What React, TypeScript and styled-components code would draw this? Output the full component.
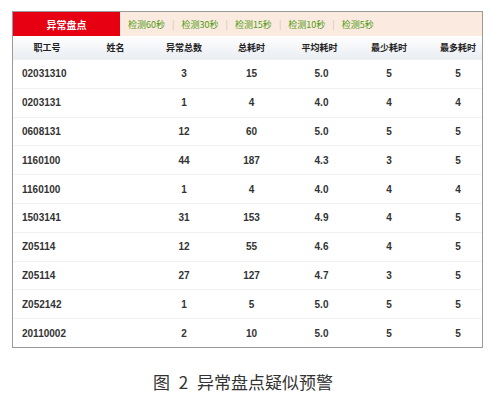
import React from "react";
import styled, { createGlobalStyle } from "styled-components";

const Global = createGlobalStyle`
  html, body { margin: 0; padding: 0; background: #ffffff; }
  body { font-family: "Liberation Sans", "Noto Sans CJK SC", sans-serif; }
`;

const COLS = "68px 69px 68px 67px 69px 70px 58px";

const Page = styled.div`
  width: 500px;
  height: 402px;
  padding: 11px 0 0 12px;
  box-sizing: border-box;
  overflow: hidden;
`;

const Frame = styled.div`
  width: 471px;
  border: 1px solid #9a9a9a;
  box-sizing: border-box;
  background: #fff;
`;

const TabBar = styled.div`
  height: 24px;
  display: flex;
  align-items: center;
  background: #fbeadf;
`;

const ActiveTab = styled.div`
  width: 107px;
  height: 100%;
  background: #e60012;
  color: #fff;
  font-family: "Noto Sans CJK SC", sans-serif;
  font-weight: 700;
  font-size: 10px;
  display: flex;
  align-items: center;
  justify-content: center;
`;

const TabLinks = styled.div`
  display: flex;
  align-items: center;
  padding-left: 8px;
  font-family: "Noto Sans CJK SC", sans-serif;
  font-size: 9px;
  color: #4f9a12;
`;

const Sep = styled.span`
  color: #cfc4bb;
  margin: 0 7px;
  font-size: 9px;
`;

const HeaderRow = styled.div`
  display: grid;
  grid-template-columns: ${COLS};
  height: 23px;
  align-items: center;
  background: linear-gradient(#ffffff, #e9edf2);
  font-family: "Noto Sans CJK SC", sans-serif;
  font-weight: 700;
  font-size: 9px;
  color: #222;
`;

const HeadCell = styled.div<{ $shift?: number }>`
  text-align: center;
  padding-left: ${(p) => p.$shift ?? 0}px;
`;

const Row = styled.div`
  display: grid;
  grid-template-columns: ${COLS};
  height: 28.8px;
  align-items: center;
  border-top: 1px solid #f2f2f2;
  box-sizing: border-box;
  font-family: "Liberation Sans", sans-serif;
  font-size: 10px;
  font-weight: 700;
  color: #333;
  &:first-of-type { border-top: none; }
`;

const IdCell = styled.div`
  padding-left: 9px;
  white-space: nowrap;
`;

const NumCell = styled.div<{ $shift?: number }>`
  text-align: center;
  padding-left: ${(p) => p.$shift ?? 0}px;
`;

const Caption = styled.div`
  margin-top: 24px;
  padding-right: 26px;
  text-align: center;
  font-family: "Noto Sans CJK SC", sans-serif;
  font-size: 17px;
  line-height: 20px;
  word-spacing: 5px;
  color: #333;
`;

const tabs = ["检测60秒", "检测30秒", "检测15秒", "检测10秒", "检测5秒"];
const heads = ["职工号", "姓名", "异常总数", "总耗时", "平均耗时", "最少耗时", "最多耗时"];
const rows: [string, string, string, string, string, string][] = [
  ["02031310", "3", "15", "5.0", "5", "5"],
  ["0203131", "1", "4", "4.0", "4", "4"],
  ["0608131", "12", "60", "5.0", "5", "5"],
  ["1160100", "44", "187", "4.3", "3", "5"],
  ["1160100", "1", "4", "4.0", "4", "4"],
  ["1503141", "31", "153", "4.9", "4", "5"],
  ["Z05114", "12", "55", "4.6", "4", "5"],
  ["Z05114", "27", "127", "4.7", "3", "5"],
  ["Z052142", "1", "5", "5.0", "5", "5"],
  ["20110002", "2", "10", "5.0", "5", "5"],
];

export default function App() {
  return (
    <Page>
      <Global />
      <Frame>
        <TabBar>
          <ActiveTab>异常盘点</ActiveTab>
          <TabLinks>
            {tabs.map((t, i) => (
              <React.Fragment key={t}>
                {i > 0 && <Sep>|</Sep>}
                <span>{t}</span>
              </React.Fragment>
            ))}
          </TabLinks>
        </TabBar>
        <HeaderRow>
          {heads.map((h, i) => (
            <HeadCell key={h} $shift={i === 6 ? 10 : 0}>{h}</HeadCell>
          ))}
        </HeaderRow>
        {rows.map((r, i) => (
          <Row key={i}>
            <IdCell>{r[0]}</IdCell>
            <div />
            <NumCell>{r[1]}</NumCell>
            <NumCell>{r[2]}</NumCell>
            <NumCell $shift={4}>{r[3]}</NumCell>
            <NumCell>{r[4]}</NumCell>
            <NumCell $shift={10}>{r[5]}</NumCell>
          </Row>
        ))}
      </Frame>
      <Caption>图 2 异常盘点疑似预警</Caption>
    </Page>
  );
}
